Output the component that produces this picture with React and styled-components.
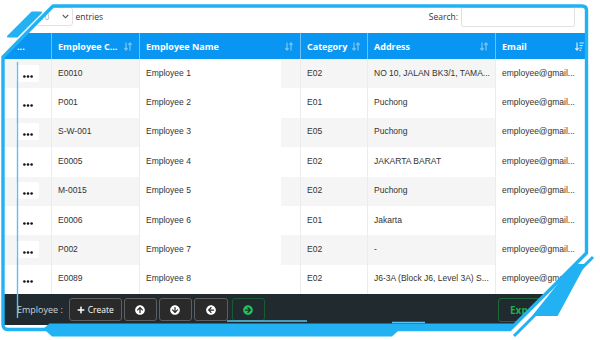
import React from "react";
import styled, { createGlobalStyle, css } from "styled-components";
import {
  FaPlus,
  FaArrowCircleUp,
  FaArrowCircleDown,
  FaArrowCircleLeft,
  FaArrowCircleRight
} from "react-icons/fa";

// colours
const frameBlue = "#22b2f4";
const headBlue = "#0996f3";
const stripe = "#f5f5f5";
const footerDark = "#212a2f";

const columns = "51px 88px 161px 67px 128px 1fr";

const rows = [
  ["E0010", "Employee 1", "E02", "NO 10, JALAN BK3/1, TAMA..."],
  ["P001", "Employee 2", "E01", "Puchong"],
  ["S-W-001", "Employee 3", "E05", "Puchong"],
  ["E0005", "Employee 4", "E02", "JAKARTA BARAT"],
  ["M-0015", "Employee 5", "E02", "Puchong"],
  ["E0006", "Employee 6", "E01", "Jakarta"],
  ["P002", "Employee 7", "E02", "-"],
  ["E0089", "Employee 8", "E02", "J6-3A (Block J6, Level 3A) S..."]
];

const SortIcon = () => (
  <svg width="8" height="9" viewBox="0 0 8 9">
    <g stroke="rgba(255,255,255,0.45)" strokeWidth="1.2" fill="none">
      <path d="M2 0.5V8M0.4 6.2L2 8L3.6 6.2" />
      <path d="M6 8.5V1M4.4 2.8L6 1L7.6 2.8" />
    </g>
  </svg>
);

const SortDescIcon = () => (
  <svg width="9" height="9" viewBox="0 0 9 9">
    <g stroke="rgba(255,255,255,0.8)" strokeWidth="1.2" fill="none">
      <path d="M2 0.5V8M0.4 6.2L2 8L3.6 6.2" />
      <path d="M4.5 1H8.8M4.5 3.5H8M4.5 6H7.2M4.5 8.4H6.2" />
    </g>
  </svg>
);

const Chevron = () => (
  <svg width="7" height="5" viewBox="0 0 7 5">
    <path d="M0.8 1L3.5 3.8L6.2 1" stroke="#555" strokeWidth="1.1" fill="none" />
  </svg>
);

const Dots = () => (
  <svg width="10" height="3" viewBox="0 0 10 3">
    <g fill="#111">
      <circle cx="1.4" cy="1.5" r="1.3" />
      <circle cx="5" cy="1.5" r="1.3" />
      <circle cx="8.6" cy="1.5" r="1.3" />
    </g>
  </svg>
);

const Frame = () => (
  <FrameSvg viewBox="0 0 600 340" width="600" height="340">
    <path
      fill="#fff"
      fillRule="evenodd"
      d="M0 0H600V340H0Z M53 6H582Q586.5 6 586.5 10.5V253L510 329.5H8Q3 329.5 3 324.5V57Z"
    />
    <path
      fill="none"
      stroke={frameBlue}
      strokeWidth="3.4"
      strokeLinejoin="round"
      d="M53 6H582Q586.5 6 586.5 10.5V253L510 329.5H8Q3 329.5 3 324.5V57Z"
    />
    <path
      fill={frameBlue}
      stroke={frameBlue}
      strokeWidth="2"
      strokeLinejoin="round"
      d="M32 12.5H41L17 36.5H8Z"
    />
    <path
      fill={frameBlue}
      stroke={frameBlue}
      strokeWidth="2"
      strokeLinejoin="round"
      d="M574 265H584L557 315H534Z"
    />
    <path
      fill={frameBlue}
      d="M43 329L49.5 323.5H517L510.5 331H398L392 336.5H52L46 331Z"
    />
    <path
      fill="none"
      stroke={frameBlue}
      strokeWidth="3"
      d="M593 257L514 336"
    />
    <g stroke="#58c2f3" strokeWidth="1.4" fill="none">
      <path d="M17.5 62V318" />
      <path d="M227 321H307" />
      <path d="M392 322.5H425" />
    </g>
  </FrameSvg>
);

const App = () => {
  return (
    <Stage>
      <GlobalStyle />
      <Toolbar>
        <Group>
          <span>Show</span>
          <SelectBox>
            <span>10</span>
            <Chevron />
          </SelectBox>
          <span>entries</span>
        </Group>
        <Group>
          <span>Search:</span>
          <SearchInput />
        </Group>
      </Toolbar>

      <HeadRow>
        <HeadCell $first>...</HeadCell>
        <HeadCell>
          Employee C...
          <SortIcon />
        </HeadCell>
        <HeadCell>
          Employee Name
          <SortIcon />
        </HeadCell>
        <HeadCell>
          Category
          <SortIcon />
        </HeadCell>
        <HeadCell>
          Address
          <SortIcon />
        </HeadCell>
        <HeadCell $last>
          Email
          <SortDescIcon />
        </HeadCell>
      </HeadRow>

      {rows.map((r, i) => {
        const odd = i % 2 === 0;
        return (
          <BodyRow key={r[0]} $odd={odd}>
            <ActionCell>
              <DotsButton>
                <Dots />
              </DotsButton>
            </ActionCell>
            <Cell>{r[0]}</Cell>
            <Cell $split={odd}>{r[1]}</Cell>
            <Cell>{r[2]}</Cell>
            <Cell>{r[3]}</Cell>
            <Cell $plain={odd}>employee@gmail...</Cell>
          </BodyRow>
        );
      })}

      <Footer>
        <FooterLabel>Employee :</FooterLabel>
        <Buttons>
          <Btn $w={53}>
            <FaPlus size={8} />
            Create
          </Btn>
          <Btn $w={33}>
            <FaArrowCircleUp size={10} />
          </Btn>
          <Btn $w={33}>
            <FaArrowCircleDown size={10} />
          </Btn>
          <Btn $w={34}>
            <FaArrowCircleLeft size={10} />
          </Btn>
          <Btn $w={33} $green>
            <FaArrowCircleRight size={10} />
          </Btn>
        </Buttons>
        <ExportBtn>Export</ExportBtn>
      </Footer>

      <Frame />
    </Stage>
  );
};

const GlobalStyle = createGlobalStyle`
  html, body {
    margin: 0;
    padding: 0;
    background: #fff;
  }
  * {
    box-sizing: border-box;
  }
`;

const Stage = styled.div`
  position: relative;
  width: 600px;
  height: 340px;
  overflow: hidden;
  background: #fff;
  display: flex;
  flex-direction: column;
  font-family: "Open Sans", "Noto Sans", sans-serif;
`;

const Toolbar = styled.div`
  height: 33px;
  flex: none;
  display: flex;
  align-items: center;
  justify-content: space-between;
  padding: 0 25px 0 6px;
  font-size: 8.5px;
  color: #333;
`;

const Group = styled.div`
  display: flex;
  align-items: center;
  gap: 3px;
`;

const SelectBox = styled.div`
  width: 42px;
  height: 19px;
  border: 1px solid #e2e2e2;
  border-radius: 3px;
  display: flex;
  align-items: center;
  justify-content: space-between;
  padding: 0 3px 0 8px;
  color: #aaa;
`;

const SearchInput = styled.div`
  width: 114px;
  height: 20px;
  border: 1px solid #e2e2e2;
  border-radius: 2px;
`;

const HeadRow = styled.div`
  flex: none;
  height: 26px;
  display: grid;
  grid-template-columns: ${columns};
  background: ${headBlue};
  color: #fff;
  font-weight: 700;
  font-size: 9px;
`;

const HeadCell = styled.div`
  display: flex;
  align-items: center;
  justify-content: space-between;
  padding: ${p => (p.$first ? "0 0 0 17px" : p.$last ? "0 16px 0 6px" : "0 7px 0 6px")};
  border-left: ${p => (p.$first ? "none" : "1px solid rgba(255, 255, 255, 0.4)")};
  white-space: nowrap;
`;

const BodyRow = styled.div`
  flex: none;
  height: 29.4px;
  display: grid;
  grid-template-columns: ${columns};
  background: ${p => (p.$odd ? stripe : "#fff")};
`;

const Cell = styled.div`
  display: flex;
  align-items: center;
  padding: 0 6px 2px 6px;
  border-left: 1px solid #ececec;
  font-family: "Liberation Sans", Arial, sans-serif;
  font-size: 8.5px;
  color: #333;
  white-space: nowrap;
  overflow: hidden;
  ${p =>
    p.$plain &&
    css`
      background: #fff;
    `}
  ${p =>
    p.$split &&
    css`
      background: linear-gradient(90deg, #fff 141px, ${stripe} 141px);
    `}
`;

const ActionCell = styled.div`
  display: flex;
  align-items: center;
  justify-content: center;
  padding-left: 4px;
`;

const DotsButton = styled.div`
  width: 23px;
  height: 17px;
  background: #fff;
  border-radius: 2px;
  display: flex;
  align-items: flex-end;
  justify-content: center;
  padding-bottom: 4px;
  margin-bottom: 1px;
`;

const Footer = styled.div`
  flex: none;
  height: 31px;
  background: ${footerDark};
  display: flex;
  align-items: center;
  padding: 0 0 0 17px;
`;

const FooterLabel = styled.span`
  font-size: 9px;
  color: #cfd3d6;
  margin-right: 6px;
`;

const Buttons = styled.div`
  display: flex;
  gap: 2px;
`;

const Btn = styled.div`
  width: ${p => p.$w}px;
  height: 23px;
  display: flex;
  align-items: center;
  justify-content: center;
  gap: 3px;
  background: ${p => (p.$green ? footerDark : "#2a2a2a")};
  border: 1px solid ${p => (p.$green ? "#1d5a33" : "#5f5f5f")};
  border-radius: 3px;
  color: ${p => (p.$green ? "#20c35a" : "#fff")};
  font-size: 8.5px;
  margin-left: ${p => (p.$green ? "2px" : "0")};
`;

const ExportBtn = styled.div`
  margin-left: auto;
  margin-right: 42px;
  width: 60px;
  height: 24px;
  display: flex;
  align-items: center;
  padding-left: 11px;
  border: 1px solid #1d6a38;
  border-radius: 3px;
  color: #1fae4d;
  font-weight: 700;
  font-size: 10px;
`;

const FrameSvg = styled.svg`
  position: absolute;
  left: 0;
  top: 0;
  pointer-events: none;
`;

export default App;
